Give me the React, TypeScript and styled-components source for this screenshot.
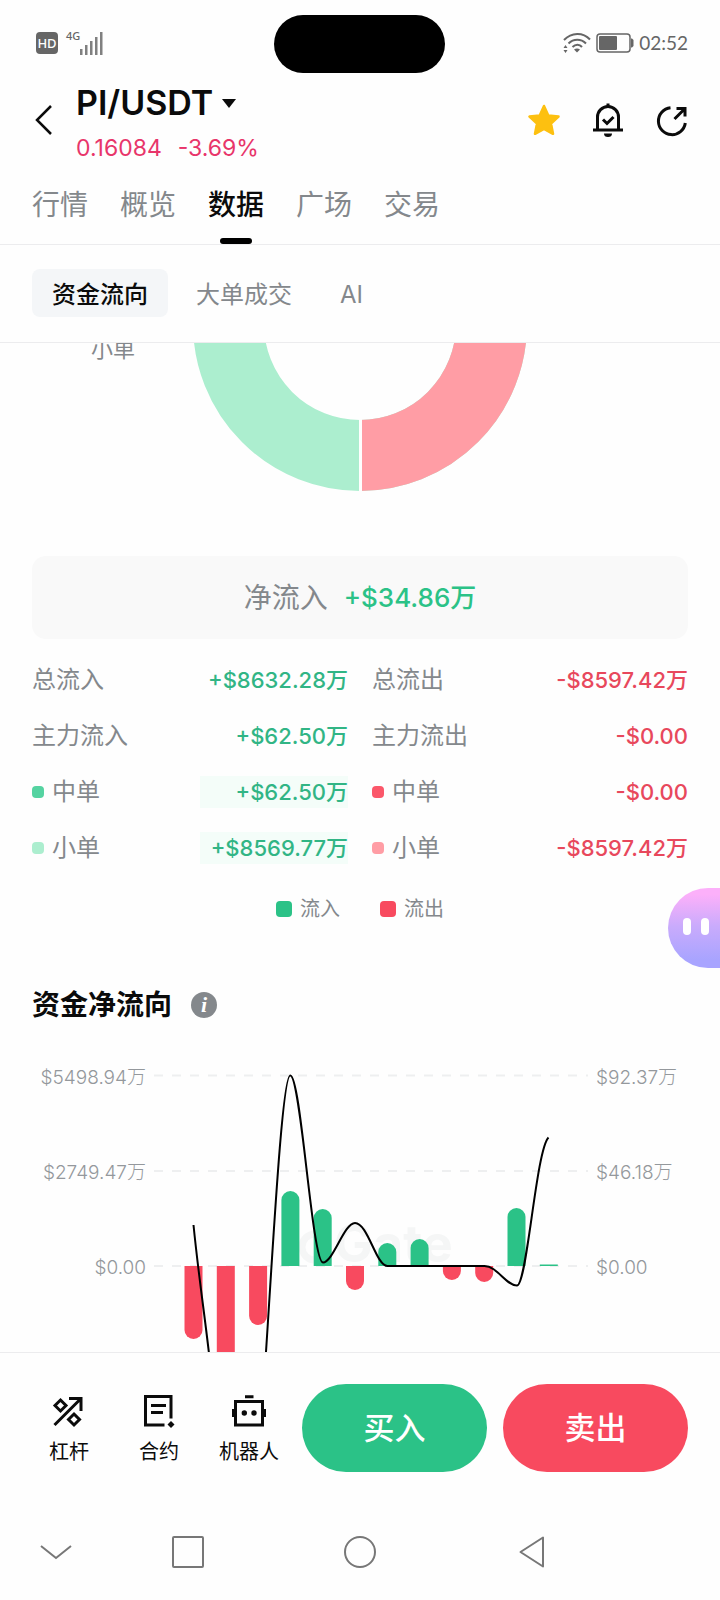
import React from "react";
import styled, { createGlobalStyle } from "styled-components";

const GREEN = "#2bc287";
const RED = "#f84a5f";

const GlobalStyle = createGlobalStyle`
  * { box-sizing: border-box; }
  body {
    margin: 0;
    background: #fefefe;
    color: #0b0b0b;
    font-family: Inter, "Noto Sans CJK SC", sans-serif;
  }
  button {
    margin: 0;
    padding: 0;
    border: 0;
    background: none;
    color: inherit;
    font: inherit;
    cursor: pointer;
  }
  h1, h2, p, dl, dd, dt { margin: 0; font-weight: inherit; }
  svg { display: block; }
`;

const Page = styled.div`
  display: flex;
  flex-direction: column;
  height: 100vh;
  overflow: hidden;
`;

const StatusBar = styled.div`
  display: grid;
  grid-template-columns: 1fr auto 1fr;
  align-items: center;
  padding: 15px 32px 0 30px;
  color: #666;
`;

const Island = styled.div`
  width: 171px;
  height: 58px;
  border-radius: 29px;
  background: #000;
`;

const StatusGroup = styled.div<{ $end?: boolean }>`
  display: flex;
  align-items: center;
  gap: 5px;
  padding: 0 0 2px 6px;
  justify-content: ${(p) => (p.$end ? "flex-end" : "flex-start")};
`;

const HdBadge = styled.span`
  width: 22px;
  height: 22px;
  margin-right: 3px;
  border-radius: 4px;
  background: #666;
  color: #fff;
  font: 500 13px/22px "Noto Sans", sans-serif;
  text-align: center;
`;

const Network = styled.span`
  display: flex;
  align-items: flex-start;
  font: 500 11px/10px "Noto Sans", sans-serif;
`;

const Clock = styled.span`
  font: 19px/24px Lato, sans-serif;
`;

const Header = styled.header`
  display: flex;
  align-items: center;
  padding: 10px 32px 3px;
`;

const BackButton = styled.button`
  width: 44px;
  padding: 0 0 7px 3px;
`;

const PairInfo = styled.div`
  flex: 1;
`;

const PairName = styled.h1`
  display: flex;
  align-items: center;
  gap: 9px;
  font-size: 34px;
  font-weight: 600;
  line-height: 40px;
`;

const PairPrice = styled.p`
  display: flex;
  gap: 16px;
  margin-top: 9px;
  color: #e8356a;
  font-size: 23px;
  line-height: 32px;
`;

const Actions = styled.div`
  display: flex;
  gap: 32px;
  padding-bottom: 7px;
`;

const Tabs = styled.nav`
  display: flex;
  gap: 32px;
  padding: 0 32px;
  border-bottom: 1px solid #ececee;
`;

const Tab = styled.button<{ $active?: boolean }>`
  display: flex;
  flex-direction: column;
  align-items: center;
  gap: 13px;
  padding-top: 18px;
  color: ${(p) => (p.$active ? "#0b0b0b" : "#84888c")};
  font-size: 28px;
  font-weight: ${(p) => (p.$active ? 500 : 400)};
  line-height: 40px;

  &::after {
    content: "";
    width: 32px;
    height: 6px;
    border-radius: 3px;
    background: ${(p) => (p.$active ? "#000" : "transparent")};
  }
`;

const SubTabs = styled.nav`
  display: flex;
  gap: 8px;
  padding: 24px 32px 25px;
  border-bottom: 1px solid #ececee;
`;

const SubTab = styled.button<{ $active?: boolean }>`
  height: 48px;
  padding: 3px 20px 0;
  border-radius: 8px;
  background: ${(p) => (p.$active ? "#f4f6f8" : "transparent")};
  color: ${(p) => (p.$active ? "#0b0b0b" : "#84888c")};
  font-size: 24px;
  font-weight: ${(p) => (p.$active ? 500 : 400)};
  line-height: 40px;
`;

const Scroller = styled.main`
  flex: 1;
  min-height: 0;
  overflow: hidden;
  padding: 0 32px;
`;

const DonutSection = styled.section`
  display: grid;
  grid-template-columns: 1fr auto 1fr;
  margin: -186px 0 65px;
`;

const DonutLabel = styled.span`
  padding: 176px 58px 0 0;
  color: #84888c;
  font-size: 22px;
  line-height: 32px;
  text-align: right;
`;

const NetCard = styled.section`
  display: flex;
  justify-content: center;
  gap: 16px;
  padding: 22px 0 21px;
  border-radius: 14px;
  background: #f9f9f9;
  color: #84888c;
  font-size: 28px;
  line-height: 40px;
`;

const NetValue = styled.strong`
  color: ${GREEN};
  font-size: 26px;
  font-weight: 500;
`;

const Flows = styled.section`
  display: grid;
  grid-template-columns: 1fr 1fr;
  column-gap: 24px;
  padding-top: 12px;
`;

const FlowList = styled.dl``;

const FlowRow = styled.div`
  display: flex;
  align-items: center;
  height: 56px;
  padding-top: 1px;
  font-size: 24px;
  line-height: 32px;
`;

const FlowName = styled.dt`
  flex: 1;
  display: flex;
  align-items: center;
  gap: 8px;
  color: #84888c;
`;

const Dot = styled.i<{ $color: string }>`
  width: 12px;
  height: 12px;
  border-radius: 4px;
  background: ${(p) => p.$color};
`;

const FlowValue = styled.dd<{ $color: string; $shaded?: boolean }>`
  min-width: 148px;
  background: ${(p) => (p.$shaded ? "#f4fdf9" : "transparent")};
  color: ${(p) => p.$color};
  font-size: 22px;
  font-weight: 500;
  text-align: right;
`;

const Legend = styled.div`
  display: flex;
  justify-content: center;
  gap: 40px;
  padding-top: 20px;
`;

const LegendItem = styled.span`
  display: flex;
  align-items: center;
  gap: 8px;
  color: #84888c;
  font-size: 20px;
  line-height: 28px;
`;

const Swatch = styled.i<{ $color: string }>`
  width: 16px;
  height: 16px;
  border-radius: 4px;
  background: ${(p) => p.$color};
`;

const SectionTitle = styled.h2`
  display: flex;
  align-items: center;
  gap: 19px;
  padding-top: 62px;
  font-size: 28px;
  font-weight: 700;
  line-height: 40px;
`;

const InfoButton = styled.button`
  width: 26px;
  height: 26px;
  border-radius: 13px;
  background: #84888c;
  color: #fff;
  font: italic 700 22px/26px "Liberation Serif", serif;
`;

const ChartRow = styled.div`
  display: grid;
  grid-template-columns: 114px 1fr 92px;
  gap: 8px;
  padding-top: 35px;
`;

const Axis = styled.div<{ $end?: boolean }>`
  display: flex;
  flex-direction: column;
  gap: 67px;
  padding-top: 4px;
  color: #94989c;
  font-size: 19px;
  font-weight: 300;
  line-height: 28px;
  text-align: ${(p) => (p.$end ? "right" : "left")};
`;

const Assistant = styled.button`
  position: absolute;
  right: 0;
  bottom: 632px;
  display: flex;
  align-items: center;
  gap: 10px;
  width: 52px;
  height: 80px;
  padding: 0 0 4px 15px;
  border-radius: 40px 0 0 40px;
  background: linear-gradient(#fcb0fa 8%, #c9abfc 48%, #a8a4ff 90%);
`;

const Eye = styled.i`
  width: 8px;
  height: 17px;
  border-radius: 4px;
  background: #fff;
`;

const TradeBar = styled.footer`
  display: flex;
  padding: 31px 32px 32px 24px;
  border-top: 1px solid #ececee;
`;

const Shortcut = styled.button`
  display: flex;
  flex-direction: column;
  align-items: center;
  gap: 8px;
  width: 90px;
  padding-top: 10px;
  font-size: 20px;
  line-height: 32px;
`;

const TradeButtons = styled.div`
  flex: 1;
  display: grid;
  grid-template-columns: 1fr 1fr;
  gap: 16px;
  padding-left: 8px;
`;

const TradeButton = styled.button<{ $color: string }>`
  height: 88px;
  border-radius: 44px;
  background: ${(p) => p.$color};
  color: #fff;
  font-size: 31px;
  font-weight: 500;
  line-height: 40px;
`;

const SystemNav = styled.nav`
  display: grid;
  grid-template-columns: 92px 1fr 1fr 1fr 102px;
  height: 96px;
  padding-left: 10px;
`;

const SystemKey = styled.button`
  display: grid;
  place-items: center;
`;

const BarsIcon = () => (
  <svg width="24" height="24" viewBox="0 0 24 24" fill="#808080">
    <rect x="0" y="18" width="2.500" height="6" />
    <rect x="5" y="14" width="2.500" height="10" />
    <rect x="10" y="10" width="2.500" height="14" />
    <rect x="15" y="6" width="2.500" height="18" />
    <rect x="20" y="1" width="2.500" height="23" />
  </svg>
);

const WifiIcon = () => (
  <svg width="28" height="22" viewBox="0 0 28 22" fill="none" stroke="#666" strokeWidth="2">
    <path d="M1 8C8.500 0 20 0 27 7.500" />
    <path d="M5.500 11.500c5-5 12.500-5 17.500 0" />
    <path d="M9.500 15c3-3 7-3 9.500 0" />
    <path d="M11 17.500c2-1.500 4-1.500 6 0l-3 3z" fill="#666" stroke="none" />
    <path d="M2.500 13l2 3h-4zM2.500 21l2-3h-4z" fill="#666" stroke="none" />
  </svg>
);

const BatteryIcon = () => (
  <svg width="38" height="20" viewBox="0 0 38 20">
    <rect x="1" y="1" width="33" height="18" rx="3" fill="none" stroke="#666" strokeWidth="1.500" />
    <rect x="3" y="3" width="18" height="14" rx="1" fill="#666" />
    <path d="M35 5.500h1l1.500 1.500v6l-1.500 1.500h-1z" fill="#666" />
  </svg>
);

const StarIcon = () => (
  <svg width="32" height="32" viewBox="0 0 32 32">
    <path
      d="M16 2l4.300 9.400 10.200 1.200-7.500 7 2 10.200L16 24.800 7 29.800l2-10.200-7.500-7 10.200-1.200z"
      fill="#fdc010"
      stroke="#fdc010"
      strokeWidth="2.500"
      strokeLinejoin="round"
    />
  </svg>
);

const BellIcon = () => (
  <svg width="32" height="34" viewBox="0 0 32 34" fill="none" stroke="#0b0b0b" strokeWidth="3">
    <path d="M1 27h30M5.500 27V14a10.500 10.500 0 0 1 21 0v13M11 16.500l4 4 6.500-6.500" />
    <path d="M16 .5v3" />
    <path d="M12 30.500h8a4 3.500 0 0 1-8 0z" fill="#0b0b0b" stroke="none" />
  </svg>
);

const ShareIcon = () => (
  <svg width="32" height="34" viewBox="0 0 32 34" fill="none" stroke="#0b0b0b" strokeWidth="3">
    <path d="M14.500 4.700A13.500 13.500 0 1 0 29.300 20" />
    <path d="M18.500 16L29 5.500M20.500 5.500h8.500v8" />
  </svg>
);

const LeverageIcon = () => (
  <svg width="34" height="34" viewBox="0 0 34 34" fill="none" stroke="#0b0b0b" strokeWidth="3">
    <path d="M2.500 31L29 4.500M17 4.500H29V17" />
    <path d="M8.500 6l5.500 5.500-5.500 5.500L3 11.500zM22 20l5.500 5.500L22 31l-5.500-5.500z" />
  </svg>
);

const ContractIcon = () => (
  <svg width="32" height="34" viewBox="0 0 32 34" fill="none" stroke="#0b0b0b" strokeWidth="3">
    <path d="M21.500 31H2.500V2.500H28V24.500M8 11.500h15M8 18.500h12" />
    <path d="M28 27l3.500 3.500L28 34l-3.500-3.500z" fill="#0b0b0b" stroke="none" />
  </svg>
);

const RobotIcon = () => (
  <svg width="36" height="34" viewBox="0 0 36 34" fill="none" stroke="#0b0b0b" strokeWidth="3">
    <path d="M4.500 7.500h27v23.500h-27zM14 2.800h8.500M2.500 15v8M33.500 15v8" />
    <circle cx="13.300" cy="19" r="2.700" fill="#0b0b0b" stroke="none" />
    <circle cx="23" cy="19" r="2.700" fill="#0b0b0b" stroke="none" />
  </svg>
);

const Donut = () => (
  <svg width="334" height="334" viewBox="0 0 334 334" fill="none" strokeWidth="71">
    <circle cx="167" cy="167" r="131.500" stroke="#aceecf" />
    <path d="M167 35.500a131.500 131.500 0 0 1 0 263" stroke="#ff9da5" />
    <path d="M167.500 0v334" stroke="#fefefe" strokeWidth="3" />
  </svg>
);

// Signed bar lengths in chart units, one per day; positive values are inflow.
const bars = [-73, -110, -59, 75, 57, -24, 23, 27, -14, -16, 58, 1.5];
const BASE = 206;
const HALF = 9;

const barPath = (value: number, index: number) => {
  const x = 30.5 + index * 32.3;
  const length = Math.abs(value);
  const r = length < 3 ? 0 : HALF;
  const dir = value > 0 ? -1 : 1;
  const shoulder = BASE - value - dir * r;
  const sweep = value > 0 ? 1 : 0;
  return `M${x} ${BASE}V${shoulder}a${HALF} ${r} 0 0 ${sweep} 18 0V${BASE}z`;
};

const FlowChart = () => (
  <svg width="100%" viewBox="0 0 434 300" role="img" aria-label="资金净流向">
    <g stroke="#eeeff0" strokeWidth="2" strokeDasharray="9 9">
      <path d="M0 15.500h434M0 111h434M0 206h434" />
    </g>
    <path d="M161 174a13 13 0 1 0 13 13h-13" fill="none" stroke="#f5f6f6" strokeWidth="7" />
    <text x="180" y="202" fill="#f5f6f6" fontFamily="Inter, sans-serif" fontWeight="700" fontSize="52">
      Gate
    </text>
    {bars.map((value, index) => (
      <path key={index} d={barPath(value, index)} fill={value > 0 ? GREEN : RED} />
    ))}
    <path
      d="M39.500 165C46 230 54 275 60 340L102 420C112 340 125 15.500 136.300 15.500C147 15.500 158 202.500 169 202.500C179 202.500 190 163 201 163C214 163 222 206 233.500 206H330.500C343 206 352 225.500 363 225.500C373 225.500 382 90 394.500 77.500"
      fill="none"
      stroke="#000"
      strokeWidth="2"
    />
  </svg>
);

const inflow = [
  { name: "总流入", value: "+$8632.28万" },
  { name: "主力流入", value: "+$62.50万" },
  { name: "中单", value: "+$62.50万", dot: "#55d3a1" },
  { name: "小单", value: "+$8569.77万", dot: "#aceecf" },
];

const outflow = [
  { name: "总流出", value: "-$8597.42万" },
  { name: "主力流出", value: "-$0.00" },
  { name: "中单", value: "-$0.00", dot: "#fb576a" },
  { name: "小单", value: "-$8597.42万", dot: "#ff9da5" },
];

type Flow = { name: string; value: string; dot?: string };

const FlowColumn = ({ rows, color, shade }: { rows: Flow[]; color: string; shade?: boolean }) => (
  <FlowList>
    {rows.map((row) => (
      <FlowRow key={row.name}>
        <FlowName>
          {row.dot && <Dot $color={row.dot} />}
          {row.name}
        </FlowName>
        <FlowValue $color={color} $shaded={shade && !!row.dot}>
          {row.value}
        </FlowValue>
      </FlowRow>
    ))}
  </FlowList>
);

export default function App() {
  return (
    <Page>
      <GlobalStyle />
      <StatusBar>
        <StatusGroup>
          <HdBadge>HD</HdBadge>
          <Network>
            4G
            <BarsIcon />
          </Network>
        </StatusGroup>
        <Island />
        <StatusGroup $end>
          <WifiIcon />
          <BatteryIcon />
          <Clock>02:52</Clock>
        </StatusGroup>
      </StatusBar>

      <Header>
        <BackButton aria-label="返回">
          <svg width="18" height="30" viewBox="0 0 18 30" fill="none" stroke="#0b0b0b" strokeWidth="2.500">
            <path d="M16 1L2 15l14 14" />
          </svg>
        </BackButton>
        <PairInfo>
          <PairName>
            PI/USDT
            <svg width="14" height="9" viewBox="0 0 14 9">
              <path d="M0 0h14L7 9z" fill="#0b0b0b" />
            </svg>
          </PairName>
          <PairPrice>
            <span>0.16084</span>
            <span>-3.69%</span>
          </PairPrice>
        </PairInfo>
        <Actions>
          <button aria-label="收藏"><StarIcon /></button>
          <button aria-label="提醒"><BellIcon /></button>
          <button aria-label="分享"><ShareIcon /></button>
        </Actions>
      </Header>

      <Tabs>
        <Tab>行情</Tab>
        <Tab>概览</Tab>
        <Tab $active>数据</Tab>
        <Tab>广场</Tab>
        <Tab>交易</Tab>
      </Tabs>
      <SubTabs>
        <SubTab $active>资金流向</SubTab>
        <SubTab>大单成交</SubTab>
        <SubTab>AI</SubTab>
      </SubTabs>

      <Scroller>
        <DonutSection>
          <DonutLabel>小单</DonutLabel>
          <Donut />
        </DonutSection>
        <NetCard>
          <span>净流入</span>
          <NetValue>+$34.86万</NetValue>
        </NetCard>
        <Flows>
          <FlowColumn rows={inflow} color="#31b585" shade />
          <FlowColumn rows={outflow} color="#e8485c" />
        </Flows>
        <Legend>
          <LegendItem><Swatch $color={GREEN} />流入</LegendItem>
          <LegendItem><Swatch $color={RED} />流出</LegendItem>
        </Legend>
        <SectionTitle>
          资金净流向
          <InfoButton aria-label="说明">i</InfoButton>
        </SectionTitle>
        <ChartRow>
          <Axis $end>
            <span>$5498.94万</span>
            <span>$2749.47万</span>
            <span>$0.00</span>
          </Axis>
          <FlowChart />
          <Axis>
            <span>$92.37万</span>
            <span>$46.18万</span>
            <span>$0.00</span>
          </Axis>
        </ChartRow>
      </Scroller>

      <TradeBar>
        <Shortcut><LeverageIcon />杠杆</Shortcut>
        <Shortcut><ContractIcon />合约</Shortcut>
        <Shortcut><RobotIcon />机器人</Shortcut>
        <TradeButtons>
          <TradeButton $color={GREEN}>买入</TradeButton>
          <TradeButton $color={RED}>卖出</TradeButton>
        </TradeButtons>
      </TradeBar>

      <SystemNav>
        <SystemKey aria-label="收起">
          <svg width="32" height="16" viewBox="0 0 32 16" fill="none" stroke="#777" strokeWidth="2">
            <path d="M1 2l15 12L31 2" />
          </svg>
        </SystemKey>
        <SystemKey aria-label="最近任务">
          <svg width="32" height="32" viewBox="0 0 32 32" fill="none" stroke="#777" strokeWidth="2">
            <rect x="1" y="1" width="30" height="30" rx="1" />
          </svg>
        </SystemKey>
        <SystemKey aria-label="主屏幕">
          <svg width="32" height="32" viewBox="0 0 32 32" fill="none" stroke="#777" strokeWidth="2">
            <circle cx="16" cy="16" r="15" />
          </svg>
        </SystemKey>
        <SystemKey aria-label="返回上一页">
          <svg width="26" height="32" viewBox="0 0 26 32" fill="none" stroke="#777" strokeWidth="2" strokeLinejoin="round">
            <path d="M24 1.500v29L1.500 16z" />
          </svg>
        </SystemKey>
      </SystemNav>

      <Assistant aria-label="智能助手">
        <Eye />
        <Eye />
      </Assistant>
    </Page>
  );
}
